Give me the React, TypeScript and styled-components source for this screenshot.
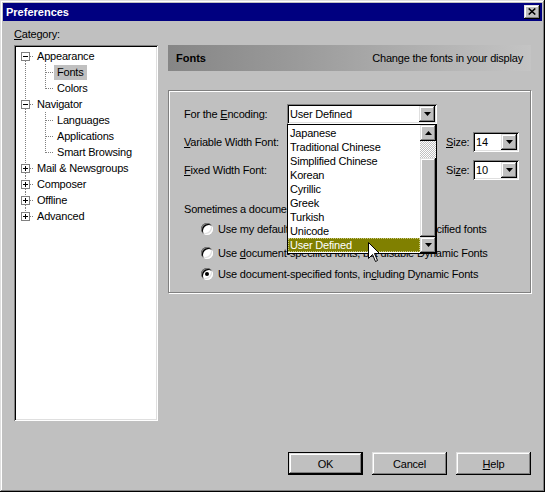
import React from 'react';
import styled, { createGlobalStyle, css } from 'styled-components';

const GlobalStyle = createGlobalStyle`
  html, body {
    margin: 0;
    padding: 0;
    background: #c0c0c0;
  }
  body {
    font-family: "Liberation Sans", Arial, sans-serif;
    font-size: 11px;
    letter-spacing: -0.2px;
    color: #000;
  }
  * { box-sizing: border-box; }
`;

const raised = css`
  background: #c0c0c0;
  box-shadow: inset -1px -1px #000, inset 1px 1px #dfdfdf, inset -2px -2px #808080, inset 2px 2px #fff;
`;

const sunken = css`
  box-shadow: inset 1px 1px #808080, inset -1px -1px #fff, inset 2px 2px #000, inset -2px -2px #dfdfdf;
`;

const Window = styled.div`
  width: 545px;
  height: 492px;
  padding: 3px;
  display: flex;
  flex-direction: column;
  background: #c0c0c0;
  box-shadow: inset -1px -1px #000, inset 1px 1px #dfdfdf, inset -2px -2px #808080, inset 2px 2px #fff;
`;

const TitleBar = styled.div`
  height: 18px;
  background: #000080;
  color: #fff;
  display: flex;
  align-items: center;
  justify-content: space-between;
  padding: 0 2px 0 3px;
`;

const Title = styled.span`
  font-weight: bold;
  letter-spacing: 0;
`;

const CloseButton = styled.div`
  width: 16px;
  height: 14px;
  ${raised};
  display: flex;
  align-items: center;
  justify-content: center;
  padding-bottom: 1px;
`;

const Body = styled.div`
  flex: 1;
  display: flex;
  flex-direction: column;
  padding: 7px 11px 14px 11px;
`;

const Main = styled.div`
  display: flex;
  gap: 10px;
`;

const Sidebar = styled.div`
  width: 144px;
  display: flex;
  flex-direction: column;
`;

const FieldLabel = styled.div`
  height: 13px;
  line-height: 13px;
  margin-bottom: 4px;
`;

const Tree = styled.div`
  height: 376px;
  background: #fff;
  padding: 3px 2px 2px 2px;
  ${sunken};
`;

const TreeRow = styled.div`
  height: 16px;
  display: flex;
  align-items: center;
`;

const NodeLabel = styled.span<{ $selected?: boolean }>`
  height: 15px;
  line-height: 15px;
  padding: 0 3px;
  white-space: nowrap;
  background: ${(p) => (p.$selected ? '#c0c0c0' : 'transparent')};
`;

const Panel = styled.div`
  flex: 1;
  padding-top: 17px;
  display: flex;
  flex-direction: column;
`;

const Header = styled.div`
  height: 26px;
  display: flex;
  align-items: center;
  justify-content: space-between;
  padding: 0 8px;
  background: linear-gradient(to right, #868686, #9a9a9a 35%, #c4c4c4);
`;

const HeaderTitle = styled.span`
  font-weight: bold;
  letter-spacing: 0;
`;

const Group = styled.div`
  margin-top: 19px;
  border: 1px solid #808080;
  box-shadow: inset 1px 1px #fff, 1px 1px #fff;
  padding: 13px 11px 11px 15px;
  display: flex;
  flex-direction: column;
`;

const FieldRow = styled.div<{ $space?: number }>`
  height: 20px;
  display: flex;
  align-items: center;
  margin-top: ${(p) => p.$space ?? 0}px;
`;

const RowLabel = styled.span`
  width: 103px;
  white-space: nowrap;
`;

const SizeLabel = styled.span`
  width: 27px;
  margin-left: 9px;
`;

const Combo = styled.div<{ $width: number }>`
  position: relative;
  width: ${(p) => p.$width}px;
  height: 20px;
  background: #fff;
  ${sunken};
  display: flex;
  align-items: center;
  padding: 2px 2px 2px 3px;
`;

const ComboText = styled.span`
  flex: 1;
  white-space: nowrap;
  overflow: hidden;
`;

const ArrowButton = styled.div`
  width: 16px;
  height: 16px;
  ${raised};
  display: flex;
  align-items: center;
  justify-content: center;
  flex-shrink: 0;
`;

const DropList = styled.div`
  position: absolute;
  top: 100%;
  left: 0;
  width: 100%;
  height: 130px;
  background: #fff;
  border: 1px solid #000;
  display: flex;
  z-index: 2;
`;

const Items = styled.div`
  flex: 1;
  display: flex;
  flex-direction: column;
  padding-top: 1px;
`;

const Item = styled.div<{ $selected?: boolean }>`
  height: 14px;
  line-height: 14px;
  padding-left: 2px;
  white-space: nowrap;
  background: ${(p) => (p.$selected ? '#808000' : 'transparent')};
  color: ${(p) => (p.$selected ? '#fff' : '#000')};
  outline: ${(p) => (p.$selected ? '1px dotted #c8c880' : 'none')};
  outline-offset: -1px;
`;

const ScrollBar = styled.div`
  width: 16px;
  display: flex;
  flex-direction: column;
`;

const Track = styled.div`
  height: 17px;
  background: repeating-conic-gradient(#fff 0 25%, #c0c0c0 0 50%) 0 0 / 2px 2px;
`;

const Thumb = styled.div`
  flex: 1;
  ${raised};
`;

const Cursor = styled.svg`
  position: absolute;
  left: 80px;
  top: 117px;
`;

const Note = styled.div`
  margin-top: 23px;
  height: 13px;
  line-height: 13px;
  white-space: nowrap;
`;

const RadioRow = styled.div<{ $space: number }>`
  height: 15px;
  display: flex;
  align-items: center;
  gap: 5px;
  margin-top: ${(p) => p.$space}px;
  margin-left: 17px;
  white-space: nowrap;
`;

const Radio = styled.span<{ $checked?: boolean }>`
  position: relative;
  width: 12px;
  height: 12px;
  border-radius: 50%;
  background: #fff;
  box-shadow: inset 1px 1px #808080, inset -1px -1px #fff, inset 2px 2px #000, inset -2px -2px #dfdfdf;
  flex-shrink: 0;
  &::after {
    content: '';
    display: ${(p) => (p.$checked ? 'block' : 'none')};
    position: absolute;
    left: 4px;
    top: 4px;
    width: 4px;
    height: 4px;
    border-radius: 50%;
    background: #000;
  }
`;

const Footer = styled.div`
  margin-top: auto;
  display: flex;
  justify-content: flex-end;
  gap: 9px;
`;

const Button = styled.div<{ $default?: boolean }>`
  width: 75px;
  height: 23px;
  display: flex;
  align-items: center;
  justify-content: center;
  ${raised};
  ${(p) =>
    p.$default &&
    css`
      border: 1px solid #000;
    `}
`;

const DownArrow = () => (
  <svg width="7" height="4" viewBox="0 0 7 4">
    <path d="M0 0h7L3.5 4z" fill="#000" />
  </svg>
);

const UpArrow = () => (
  <svg width="7" height="4" viewBox="0 0 7 4">
    <path d="M0 4h7L3.5 0z" fill="#000" />
  </svg>
);

const dotted = { stroke: '#808080', strokeDasharray: '1 1', shapeRendering: 'crispEdges' as const };

const RootCell = ({ first, last, open }: { first: boolean; last: boolean; open: boolean }) => (
  <svg width="18" height="16" viewBox="0 0 18 16" style={{ flexShrink: 0 }}>
    {!first && <line x1="9.5" y1="0" x2="9.5" y2="4" {...dotted} />}
    {!last && <line x1="9.5" y1="13" x2="9.5" y2="16" {...dotted} />}
    <line x1="14" y1="8.5" x2="18" y2="8.5" {...dotted} />
    <rect x="5.5" y="4.5" width="8" height="8" fill="#fff" stroke="#808080" shapeRendering="crispEdges" />
    <line x1="7" y1="8.5" x2="12" y2="8.5" stroke="#000" shapeRendering="crispEdges" />
    {!open && <line x1="9.5" y1="6" x2="9.5" y2="11" stroke="#000" shapeRendering="crispEdges" />}
  </svg>
);

const ChildCells = ({ last }: { last: boolean }) => (
  <>
    <svg width="18" height="16" viewBox="0 0 18 16" style={{ flexShrink: 0 }}>
      <line x1="9.5" y1="0" x2="9.5" y2="16" {...dotted} />
    </svg>
    <svg width="20" height="16" viewBox="0 0 20 16" style={{ flexShrink: 0 }}>
      <line x1="11.5" y1="0" x2="11.5" y2={last ? 9 : 16} {...dotted} />
      <line x1="12" y1="8.5" x2="20" y2="8.5" {...dotted} />
    </svg>
  </>
);

const categories = [
  { label: 'Appearance', open: true, children: ['Fonts', 'Colors'] },
  { label: 'Navigator', open: true, children: ['Languages', 'Applications', 'Smart Browsing'] },
  { label: 'Mail & Newsgroups', open: false, children: [] },
  { label: 'Composer', open: false, children: [] },
  { label: 'Offline', open: false, children: [] },
  { label: 'Advanced', open: false, children: [] },
];

const encodings = [
  'Japanese',
  'Traditional Chinese',
  'Simplified Chinese',
  'Korean',
  'Cyrillic',
  'Greek',
  'Turkish',
  'Unicode',
  'User Defined',
];

const App = () => {
  return (
    <>
      <GlobalStyle />
      <Window>
        <TitleBar>
          <Title>Preferences</Title>
          <CloseButton>
            <svg width="8" height="7" viewBox="0 0 8 7">
              <path d="M0.7 0.5L7.3 6.5M7.3 0.5L0.7 6.5" stroke="#000" strokeWidth="1.6" />
            </svg>
          </CloseButton>
        </TitleBar>
        <Body>
          <Main>
            <Sidebar>
              <FieldLabel>
                <u>C</u>ategory:
              </FieldLabel>
              <Tree>
                {categories.map((cat, i) => (
                  <React.Fragment key={cat.label}>
                    <TreeRow>
                      <RootCell first={i === 0} last={i === categories.length - 1} open={cat.open} />
                      <NodeLabel>{cat.label}</NodeLabel>
                    </TreeRow>
                    {cat.open &&
                      cat.children.map((child, j) => (
                        <TreeRow key={child}>
                          <ChildCells last={j === cat.children.length - 1} />
                          <NodeLabel $selected={child === 'Fonts'}>{child}</NodeLabel>
                        </TreeRow>
                      ))}
                  </React.Fragment>
                ))}
              </Tree>
            </Sidebar>
            <Panel>
              <Header>
                <HeaderTitle>Fonts</HeaderTitle>
                <span>Change the fonts in your display</span>
              </Header>
              <Group>
                <FieldRow>
                  <RowLabel>
                    For the <u>E</u>ncoding:
                  </RowLabel>
                  <Combo $width={150}>
                    <ComboText>User Defined</ComboText>
                    <ArrowButton>
                      <DownArrow />
                    </ArrowButton>
                    <DropList>
                      <Items>
                        {encodings.map((enc) => (
                          <Item key={enc} $selected={enc === 'User Defined'}>
                            {enc}
                          </Item>
                        ))}
                      </Items>
                      <ScrollBar>
                        <ArrowButton>
                          <UpArrow />
                        </ArrowButton>
                        <Track />
                        <Thumb />
                        <ArrowButton>
                          <DownArrow />
                        </ArrowButton>
                      </ScrollBar>
                      <Cursor width="13" height="21" viewBox="0 0 13 21">
                        <path
                          d="M0.5 0.5V16.5L4.5 12.5L7.5 19.5L9.5 18.5L6.5 11.5H11.5Z"
                          fill="#fff"
                          stroke="#000"
                          strokeLinejoin="miter"
                        />
                      </Cursor>
                    </DropList>
                  </Combo>
                </FieldRow>
                <FieldRow $space={8}>
                  <RowLabel>
                    <u>V</u>ariable Width Font:
                  </RowLabel>
                  <Combo $width={150}>
                    <ComboText />
                    <ArrowButton>
                      <DownArrow />
                    </ArrowButton>
                  </Combo>
                  <SizeLabel>
                    <u>S</u>ize:
                  </SizeLabel>
                  <Combo $width={46}>
                    <ComboText>14</ComboText>
                    <ArrowButton>
                      <DownArrow />
                    </ArrowButton>
                  </Combo>
                </FieldRow>
                <FieldRow $space={8}>
                  <RowLabel>
                    <u>F</u>ixed Width Font:
                  </RowLabel>
                  <Combo $width={150}>
                    <ComboText />
                    <ArrowButton>
                      <DownArrow />
                    </ArrowButton>
                  </Combo>
                  <SizeLabel>
                    Si<u>z</u>e:
                  </SizeLabel>
                  <Combo $width={46}>
                    <ComboText>10</ComboText>
                    <ArrowButton>
                      <DownArrow />
                    </ArrowButton>
                  </Combo>
                </FieldRow>
                <Note>Sometimes a document will provide its own fonts.</Note>
                <RadioRow $space={5}>
                  <Radio />
                  <span>Use my default fonts, overriding document-specified fonts</span>
                </RadioRow>
                <RadioRow $space={9}>
                  <Radio />
                  <span>
                    Use <u>d</u>ocument-specified fonts, but disable Dynamic Fonts
                  </span>
                </RadioRow>
                <RadioRow $space={6}>
                  <Radio $checked />
                  <span>
                    Use document-specified fonts, in<u>c</u>luding Dynamic Fonts
                  </span>
                </RadioRow>
              </Group>
            </Panel>
          </Main>
          <Footer>
            <Button $default>OK</Button>
            <Button>Cancel</Button>
            <Button>
              <span>
                <u>H</u>elp
              </span>
            </Button>
          </Footer>
        </Body>
      </Window>
    </>
  );
};

export default App;
